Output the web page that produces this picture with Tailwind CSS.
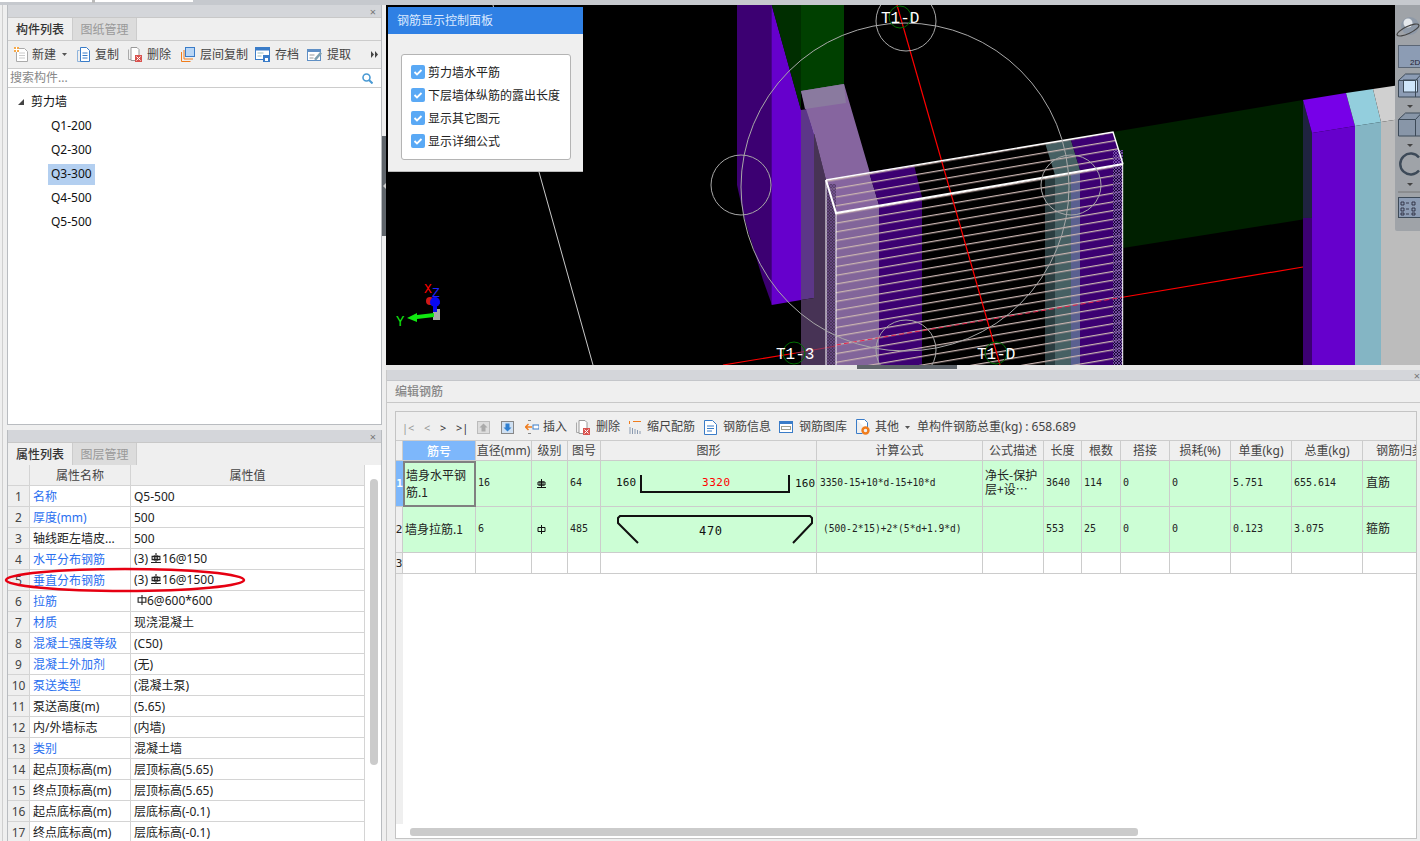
<!DOCTYPE html>
<html lang="zh-CN">

<head>
 <meta charset="UTF-8">
 <title>编辑钢筋</title>
 <script src="https://cdn.jsdelivr.net/npm/@tailwindcss/browser@4"></script>
</head>

<body class="bg-[#efefef]">
 <div class="relative w-[1420px] h-[841px] overflow-hidden flex flex-col text-[12px] leading-none text-[#222] font-['Noto_Sans','Noto_Sans_CJK_SC',sans-serif]">

  <!-- top edge -->
  <div class="h-[5px] shrink-0 flex bg-[#c6c9ce]">
   <div class="w-[92px] h-[2px] bg-white"></div>
   <div class="w-[3px] h-[3px] bg-[#bbb]"></div>
   <div class="w-[98px] h-[2px] bg-white"></div>
  </div>

  <div class="flex flex-1 min-h-0">

   <!-- left column -->
   <div class="w-[7px] shrink-0 bg-[#efefef] pl-[2px]"><div class="w-[1px] h-full bg-[#cfcfcf]"></div></div>

   <div class="w-[375px] shrink-0 flex flex-col">
    <!-- component list -->
    <div class="h-[420px] shrink-0 flex flex-col border-x border-b border-[#b9bcc0] bg-white">
     <div class="h-[12px] shrink-0 bg-[#d4d6da] flex items-center justify-end pr-[5px] text-[#777] text-[11px]">×</div>
     <div class="h-[23px] shrink-0 flex bg-[#efefef] border-t border-[#c8c8c8]">
      <div class="w-[64px] pt-[1px] flex items-center justify-center font-medium text-[#333]">构件列表</div>
      <div class="w-[65px] pt-[1px] flex items-center justify-center bg-[#dcdcdc] text-[#999] border-x border-[#ccc]">图纸管理</div>
     </div>
     <div class="h-[28px] shrink-0 flex items-center pl-[6px] gap-[9px] bg-[#efefef] border-t border-[#ccc] text-[#444]">
      <div class="flex items-center gap-[4px]">
       <svg class="w-[14px] h-[15px]" viewBox="0 0 14 15"><path d="M2.500 1.500h8l3 3v10h-11z" fill="#fff" stroke="#aaa"/><path d="M5 6h6M5 8.500h6M5 11h6" stroke="#ccc"/><rect x="0" y="0" width="5" height="5" fill="#f6a94a"/><path d="M2.500 0v5M0 2.500h5" stroke="#fff"/></svg>
       <span>新建</span>
       <svg class="w-[5px] h-[3px] ml-[2px]" viewBox="0 0 5 3"><path d="M0 0h5L2.500 3z" fill="#555"/></svg>
      </div>
      <div class="flex items-center gap-[5px] ml-[1px]">
       <svg class="w-[13px] h-[15px]" viewBox="0 0 13 15"><path d="M.5 3.500h2M.5 3.500v11h3" fill="none" stroke="#8fb4dd"/><path d="M3.500 .5h6l3 3v11h-9z" fill="#fff" stroke="#3a7cc8"/><path d="M5.500 6h5M5.500 8.500h5M5.500 11h5" stroke="#3a7cc8"/></svg>
       <span>复制</span>
      </div>
      <div class="flex items-center gap-[5px]">
       <svg class="w-[14px] h-[15px]" viewBox="0 0 14 15"><path d="M.5 2.500v10h3" fill="none" stroke="#aaa"/><path d="M3 .5h6l2 2v11H3z" fill="#fff" stroke="#999"/><rect x="7" y="8" width="7" height="7" fill="#d9534f"/><path d="M8.500 9.500l4 4M12.500 9.500l-4 4" stroke="#fff"/></svg>
       <span>删除</span>
      </div>
      <div class="flex items-center gap-[5px] ml-[1px]">
       <svg class="w-[14px] h-[15px]" viewBox="0 0 14 15"><path d="M.5 5v9.500h9M3 3v9h9" fill="none" stroke="#f07c1c"/><rect x="4.500" y=".5" width="9" height="9" fill="#b9d6f5" stroke="#3a7cc8"/></svg>
       <span>层间复制</span>
      </div>
      <div class="flex items-center gap-[5px] ml-[-2px]">
       <svg class="w-[15px] h-[15px]" viewBox="0 0 15 15"><rect x=".5" y=".5" width="14" height="12" fill="#fff" stroke="#3a7cc8"/><rect x="0" y="0" width="15" height="3.500" fill="#3a7cc8"/><path d="M2.500 6h6M2.500 9h4" stroke="#9bb"/><rect x="8" y="8" width="7" height="7" fill="#3a7cc8"/><rect x="10" y="11" width="3" height="3" fill="#fff"/></svg>
       <span>存档</span>
      </div>
      <div class="flex items-center gap-[5px] ml-[-1px]">
       <svg class="w-[15px] h-[15px]" viewBox="0 0 15 15"><rect x=".5" y="2.500" width="13" height="11" fill="#fff" stroke="#5f8fc5"/><rect x="0" y="2" width="14" height="3" fill="#5f8fc5"/><path d="M2.500 8h5M2.500 11h4" stroke="#999"/><path d="M7 12l6-7 2 1.500-6 7z" fill="#7fa0b0"/></svg>
       <span>提取</span>
      </div>
      <svg class="w-[7px] h-[7px] ml-[11px]" viewBox="0 0 7 7"><path d="M0 0l3 3.500L0 7zM4 0l3 3.500L4 7z" fill="#444"/></svg>
     </div>
     <div class="h-[20px] shrink-0 flex items-center justify-between pl-[2px] pr-[8px] border-y border-[#ccc] bg-white text-[#888]">
      <span>搜索构件...</span>
      <svg class="w-[11px] h-[11px]" viewBox="0 0 11 11"><circle cx="4.500" cy="4.500" r="3.500" fill="none" stroke="#4a9ad4" stroke-width="1.600"/><path d="M7 7l3.500 3.500" stroke="#4a9ad4" stroke-width="2"/></svg>
     </div>
     <div class="flex-1 pt-[2px] text-[#111]">
      <div class="h-[24px] flex items-center pl-[10px] gap-[7px]">
       <svg class="w-[6px] h-[6px]" viewBox="0 0 6 6"><path d="M6 0v6H0z" fill="#444"/></svg>
       <span>剪力墙</span>
      </div>
      <div class="h-[24px] flex items-center pl-[40px]"><span class="px-[3px] h-[21px] flex items-center">Q1-200</span></div>
      <div class="h-[24px] flex items-center pl-[40px]"><span class="px-[3px] h-[21px] flex items-center">Q2-300</span></div>
      <div class="h-[24px] flex items-center pl-[40px]"><span class="px-[3px] h-[21px] flex items-center bg-[#b3cff0]">Q3-300</span></div>
      <div class="h-[24px] flex items-center pl-[40px]"><span class="px-[3px] h-[21px] flex items-center">Q4-500</span></div>
      <div class="h-[24px] flex items-center pl-[40px]"><span class="px-[3px] h-[21px] flex items-center">Q5-500</span></div>
     </div>
    </div>

    <div class="h-[5px] shrink-0"></div>

    <!-- property list -->
    <div class="flex-1 min-h-0 flex flex-col border-x border-[#b9bcc0] bg-white overflow-hidden">
     <div class="h-[12px] shrink-0 bg-[#d4d6da] flex items-center justify-end pr-[5px] text-[#777] text-[11px]">×</div>
     <div class="h-[23px] shrink-0 flex bg-[#efefef] border-t border-[#c8c8c8]">
      <div class="w-[64px] pt-[1px] flex items-center justify-center font-medium text-[#333]">属性列表</div>
      <div class="w-[65px] pt-[1px] flex items-center justify-center bg-[#dcdcdc] text-[#999] border-x border-[#ccc]">图层管理</div>
     </div>
     <div class="flex flex-1 min-h-0">
      <div class="w-[357px] shrink-0">
       <div class="grid grid-cols-[22px_101px_234px] h-[21px] bg-[#efefef] text-[#444]">
        <div class="border-r border-b border-[#d4d4d4]"></div>
        <div class="border-r border-b border-[#d4d4d4] pt-[2px] flex items-center justify-center">属性名称</div>
        <div class="border-r border-b border-[#d4d4d4] pt-[2px] flex items-center justify-center">属性值</div>
       </div>
       <div id="propRows"></div>
      </div>
      <div class="flex-1 pl-[5px] pt-[14px]">
       <div class="w-[8px] h-[286px] rounded-[4px] bg-[#cbcbcb]"></div>
      </div>
     </div>
    </div>
   </div>

   <!-- splitter -->
   <div class="w-[4px] shrink-0 bg-[#efefef]">
    <div class="mt-[131px] h-[100px] bg-[#5f656b] flex items-center justify-center">
     <svg class="w-[3px] h-[6px]" viewBox="0 0 3 6"><path d="M3 0v6L0 3z" fill="#ccc"/></svg>
    </div>
   </div>

   <!-- right column -->
   <div class="flex-1 min-w-0 flex flex-col">
    <div class="relative h-[360px] shrink-0 bg-black overflow-hidden">
     <svg class="w-[1034px] h-[360px] block" viewBox="386 5 1034 360">
      <defs>
       <pattern id="rebar" patternUnits="userSpaceOnUse" width="60" height="8.700" patternTransform="skewY(-9.700)">
        <rect width="60" height="1.300" fill="#c9b4b0"/>
       </pattern>
       <pattern id="hatch" patternUnits="userSpaceOnUse" width="3" height="3">
        <path d="M0 0l3 3M3 0L0 3" stroke="#a070d8" stroke-width=".6"/>
       </pattern>
      </defs>

      <!-- left column and wall behind -->
      <path d="M737 5h35v300l-9-25-19-63-7-32z" fill="#3c0072"/>
      <path d="M771.700 5L801 110v190l-29.300 5z" fill="#6600cc"/>
      <path d="M771.700 5H801v105z" fill="#002e00"/>
      <path d="M801 5h43v80l-43 6z" fill="#004000"/>
      <path d="M801 110l13-2v190l-13 2z" fill="#5c3688"/>
      <path d="M807 109l8-1 8 27-9-1z" fill="#9c6cd8"/>
      <path d="M801 300l13-2V133l12 47v185h-25z" fill="#473355"/>
      <path d="M801 91l43-7 26 89-44 7-12-47-8-24z" fill="#86659f"/>
      <path d="M801 91l43-7 2 19-41 6z" fill="#8a7a9f"/>

      <!-- right wall -->
      <path d="M1113 132l190-32 9 118-189 30v-84z" fill="#002000"/>
      <path d="M1303 100l9 33v85h-9z" fill="#1f2340"/>
      <path d="M1303 218h9v147h-9z" fill="#3c0072"/>
      <path d="M1312 133l43-7v239h-43z" fill="#6600cc"/>
      <path d="M1303 100l43-7 9 33-43 7z" fill="#7700e8"/>
      <path d="M1355 126l26-4v243h-26z" fill="#84b5c4"/>
      <path d="M1346 93l27-4 8 33-26 4z" fill="#93cedd"/>
      <path d="M1373 89l47-7v34l-39 6z" fill="#d0d0d0"/>
      <path d="M1381 122l39-6v249h-39z" fill="#bcbcbc"/>

      <!-- wall body inside the wire box -->
      <path d="M826 180l43-8 10 33-43 8z" fill="#86659f"/>
      <path d="M869 172l45-7 8 32-43 8z" fill="#3c0072"/>
      <path d="M1045 143l26-3 9 30-25 5z" fill="#466063"/>
      <path d="M1071 140l42-8 10 32-43 6z" fill="#3c0072"/>
      <path d="M836 213l43-8v160h-43z" fill="#82659a"/>
      <path d="M879 205l43-8v168h-43z" fill="#3c0072"/>
      <path d="M1045 177l10-2v190h-10z" fill="#2a3d40"/>
      <path d="M1055 175l16-3v193h-16z" fill="#466063"/>
      <path d="M1071 172l9-2v195h-9z" fill="#5a6090"/>
      <path d="M1080 170l33-5v200h-33z" fill="#3c0072"/>
      <path d="M826 180v185h10V213z" fill="#473355"/>
      <path d="M826 180l287-48 10 32v201H836V213z" fill="url(#rebar)"/>
      <rect x="826" y="184" width="10" height="181" fill="#473355" fill-opacity=".7"/>
      <rect x="826" y="184" width="10" height="181" fill="url(#hatch)" fill-opacity=".5"/>
      <rect x="1113" y="150" width="10" height="215" fill="#2c0a58" fill-opacity=".6"/>
      <rect x="1113" y="150" width="10" height="215" fill="url(#hatch)"/>

      <!-- axis lines -->
      <path d="M897 5l103 360" stroke="#f00" stroke-width="1.200" fill="none"/>
      <path d="M1124 297l179-30" stroke="#f00" stroke-width="1.200" fill="none"/>
      <path d="M836 345l288-48" stroke="#e8204a" stroke-dasharray="5 3" fill="none"/>
      <path d="M723 365l73-12" stroke="#f00" stroke-width="1.200" fill="none"/>
      <path d="M796 353l40-7" stroke="#a03050" fill="none"/>
      <path d="M539 172l54 193M493 5l.5 2" stroke="#c8c8c8" fill="none"/>

      <!-- wire box -->
      <path d="M836 213V365M826 180V365M1122.700 164V365" stroke="#fff" fill="none"/>
      <path d="M826 180l287-48 10 32" stroke="#fff" stroke-width="1.400" fill="none"/>
      <path d="M826 180l10 33 287-49" stroke="#fff" stroke-width="2" fill="none"/>

      <!-- grid circles -->
      <g fill="none" stroke="#a8a8a8">
       <circle cx="905" cy="187" r="164"/>
       <circle cx="741" cy="185" r="30"/>
       <circle cx="906" cy="21" r="30"/>
       <circle cx="1071" cy="185" r="30"/>
       <circle cx="906" cy="350" r="30"/>
      </g>
      <g fill="none" stroke="#007000">
       <circle cx="900" cy="17" r="11"/>
       <circle cx="794" cy="353" r="11"/>
       <circle cx="996" cy="353" r="11"/>
      </g>
      <g fill="#fff" font-size="16" font-family="Liberation Mono, monospace">
       <text x="881" y="23">T1-D</text>
       <text x="776" y="359">T1-3</text>
       <text x="977" y="359">T1-D</text>
      </g>

      <!-- axis gizmo -->
      <circle cx="430" cy="301" r="4" fill="#d01818"/>
      <rect x="433" y="309" width="7" height="11" fill="#aaa"/>
      <path d="M407 318l10-5v2l17-2v4l-17 2v3z" fill="#10e810"/>
      <path d="M433 312h4v-8h3l-5-7-5 7h3z" fill="#0808f0"/>
      <circle cx="435" cy="302" r="5" fill="#0808f0"/>
      <text x="424" y="293" font-size="13" fill="#f00" font-family="Liberation Mono, monospace">X</text>
      <text x="432" y="297" font-size="13" fill="#2020ff" font-family="Liberation Mono, monospace">Z</text>
      <text x="396" y="326" font-size="14" fill="#10e810" font-family="Liberation Mono, monospace">Y</text>
     </svg>

     <!-- rebar display panel -->
     <div class="absolute left-[2px] top-[2px] w-[195px] h-[165px] bg-[#efefef] border-b border-[#bbb]">
      <div class="h-[27px] bg-[#2f80e4] text-[#dbe9ff] flex items-center pl-[9px]">钢筋显示控制面板</div>
      <div class="mt-[20px] ml-[13px] w-[170px] h-[106px] bg-white border border-[#b4b4b4] rounded-[3px] pt-[10px] pl-[9px] flex flex-col gap-[9px]">
       <label class="flex items-center gap-[3px] h-[14px]">
        <svg class="w-[14px] h-[14px]" viewBox="0 0 14 14"><rect width="14" height="14" rx="2" fill="#5aa9f5"/><path d="M3.500 7l2.500 2.500 4.500-4.500" fill="none" stroke="#fff" stroke-width="1.800"/></svg>
        <span class="pt-[2px]">剪力墙水平筋</span>
       </label>
       <label class="flex items-center gap-[3px] h-[14px]">
        <svg class="w-[14px] h-[14px]" viewBox="0 0 14 14"><rect width="14" height="14" rx="2" fill="#5aa9f5"/><path d="M3.500 7l2.500 2.500 4.500-4.500" fill="none" stroke="#fff" stroke-width="1.800"/></svg>
        <span class="pt-[2px]">下层墙体纵筋的露出长度</span>
       </label>
       <label class="flex items-center gap-[3px] h-[14px]">
        <svg class="w-[14px] h-[14px]" viewBox="0 0 14 14"><rect width="14" height="14" rx="2" fill="#5aa9f5"/><path d="M3.500 7l2.500 2.500 4.500-4.500" fill="none" stroke="#fff" stroke-width="1.800"/></svg>
        <span class="pt-[2px]">显示其它图元</span>
       </label>
       <label class="flex items-center gap-[3px] h-[14px]">
        <svg class="w-[14px] h-[14px]" viewBox="0 0 14 14"><rect width="14" height="14" rx="2" fill="#5aa9f5"/><path d="M3.500 7l2.500 2.500 4.500-4.500" fill="none" stroke="#fff" stroke-width="1.800"/></svg>
        <span class="pt-[2px]">显示详细公式</span>
       </label>
      </div>
     </div>

     <!-- view tool rail -->
     <div class="absolute right-0 top-0 w-[25px] h-[226px] bg-[#9fa3a8] rounded-bl-[2px] overflow-hidden">
      <svg class="w-[25px] h-[226px] block" viewBox="0 0 25 226">
       <circle cx="15" cy="21" r="9" fill="#8f9aa8"/>
       <circle cx="13" cy="18" r="4.500" fill="#e4e8ec"/>
       <ellipse cx="13" cy="25" rx="12" ry="3.500" fill="none" stroke="#444" stroke-width="1.200" transform="rotate(-25 13 25)"/>
       <rect x="3.500" y="40.500" width="26" height="22" fill="#8c9cb4" stroke="#5b6675"/>
       <text x="15" y="60" font-size="8" fill="#223" font-family="Liberation Sans, sans-serif">2D</text>
       <path d="M3.500 75.500l7-6.500H30v23H3.500z" fill="#8c9cb4" stroke="#3d4a58"/>
       <rect x="8.500" y="75" width="14" height="12" fill="#cfe6fb" stroke="#3d4a58"/>
       <path d="M3.500 75.500h17v16.500M20.500 75.500l6-6.500" fill="none" stroke="#3d4a58"/>
       <path d="M12 100h6l-3 3z" fill="#444"/>
       <path d="M3.500 114.500l7-6.500H30v23H3.500z" fill="#8896a8" stroke="#3d4a58"/>
       <path d="M3.500 114.500h17v16.500M20.500 114.500l6-6.500" fill="none" stroke="#3d4a58"/>
       <path d="M12 139h6l-3 3z" fill="#444"/>
       <path d="M24 152.500a10.500 10.500 0 1 0 0 13" fill="none" stroke="#3d4a58" stroke-width="2.400"/>
       <path d="M12 178h6l-3 3z" fill="#444"/>
       <path d="M3 187h22" stroke="#777"/>
       <rect x="3.500" y="192.500" width="26" height="20" fill="#8c9cb4" stroke="#3d4a58"/>
       <path d="M6 197h3v3H6zM6 203h3v3H6zM6 208h3v2H6zM11 198h3M11 204h3M11 209h3M17 197h3v3h-3zM17 203h3v3h-3zM17 208h3v2h-3z" fill="none" stroke="#223" stroke-width=".8"/>
      </svg>
     </div>
    </div>

    <!-- viewport splitter -->
    <div class="h-[5px] shrink-0 bg-[#e6e6e6] pl-[471px]">
     <div class="w-[100px] h-[4px] bg-[#5f656b]"></div>
    </div>

    <!-- rebar editor -->
    <div class="flex-1 min-h-0 flex flex-col border-l border-[#c8c8c8] bg-[#efefef]">
     <div class="h-[11px] shrink-0 bg-[#d4d6da] border-b border-[#c4c6ca] flex items-center justify-end text-[#777] text-[11px]">×</div>
     <div class="h-[22px] shrink-0 flex items-center pl-[8px] text-[#888] font-medium border-b border-[#c8c8c8]">编辑钢筋</div>

     <div class="flex-1 min-h-0 flex flex-col ml-[8px] mr-[3px] mt-[8px] mb-[2px] border border-[#c4c4c4] bg-white overflow-hidden">
      <!-- toolbar -->
      <div class="h-[28px] shrink-0 flex items-center pl-[6px] pt-[2px] bg-[#efefef] text-[#444]">
       <span class="w-[22px] text-[#999] text-[11px]">|&lt;</span>
       <span class="w-[16px] text-[#999] text-[11px]">&lt;</span>
       <span class="w-[16px] text-[#333] text-[11px]">&gt;</span>
       <span class="w-[21px] text-[#333] text-[11px]">&gt;|</span>
       <svg class="w-[13px] h-[13px] mr-[11px]" viewBox="0 0 13 13"><rect x=".5" y=".5" width="12" height="12" fill="#ddd" stroke="#bbb"/><path d="M6.500 2.500l4 4H8.500v4h-4v-4H2.500z" fill="#aaa"/></svg>
       <svg class="w-[13px] h-[13px] mr-[11px]" viewBox="0 0 13 13"><rect x=".5" y=".5" width="12" height="12" fill="#cfe0f2" stroke="#888"/><path d="M6.500 10.500l4-4H8.500v-4h-4v4H2.500z" fill="#2f7fd0"/></svg>
       <svg class="w-[14px] h-[14px] mr-[4px]" viewBox="0 0 14 14"><path d="M3 .5h3M3 13.500h3" stroke="#888"/><path d="M7 7H1M3.500 4L.5 7l3 3" fill="none" stroke="#f07c1c" stroke-width="1.400"/><rect x="8" y="5" width="6" height="4" fill="#fff" stroke="#3a7cc8"/></svg>
       <span class="mr-[9px]">插入</span>
       <svg class="w-[14px] h-[15px] mr-[6px]" viewBox="0 0 14 15"><path d="M.5 2.500v10h3" fill="none" stroke="#aaa"/><path d="M3 .5h6l2 2v11H3z" fill="#fff" stroke="#999"/><rect x="7" y="8" width="7" height="7" fill="#d9534f"/><path d="M8.500 9.500l4 4M12.500 9.500l-4 4" stroke="#fff"/></svg>
       <span class="mr-[9px]">删除</span>
       <svg class="w-[13px] h-[14px] mr-[5px]" viewBox="0 0 13 14"><path d="M.5 1v3M4 1.500h8" stroke="#f07c1c"/><path d="M1 14V7M3.500 14V8M6 14V9M8.500 14v-4M11 14v-3" stroke="#8a9ab0"/></svg>
       <span class="mr-[9px]">缩尺配筋</span>
       <svg class="w-[13px] h-[15px] mr-[6px]" viewBox="0 0 13 15"><path d="M.5 .5h8l4 4v10H.5z" fill="#fff" stroke="#3a7cc8"/><path d="M3 6h7M3 8.500h7M3 11h5" stroke="#3a7cc8"/></svg>
       <span class="mr-[8px]">钢筋信息</span>
       <svg class="w-[14px] h-[12px] mr-[6px]" viewBox="0 0 14 12"><rect x=".5" y=".5" width="13" height="11" fill="#fff" stroke="#3a7cc8"/><rect width="14" height="3" fill="#3a7cc8"/><rect x="2.500" y="5.500" width="9" height="3" fill="none" stroke="#a0a090"/></svg>
       <span class="mr-[9px]">钢筋图库</span>
       <svg class="w-[14px] h-[16px] mr-[5px]" viewBox="0 0 14 16"><path d="M.5 .5h8l3 3v8" fill="#fff" stroke="#3a7cc8"/><path d="M.5 .5v14h6" fill="none" stroke="#3a7cc8"/><circle cx="9.500" cy="11.500" r="3" fill="none" stroke="#f07c1c" stroke-width="2.400"/></svg>
       <span class="mr-[6px]">其他</span>
       <svg class="w-[5px] h-[3px] mr-[7px]" viewBox="0 0 5 3"><path d="M0 0h5L2.500 3z" fill="#555"/></svg>
       <span>单构件钢筋总重(kg) : 658.689</span>
      </div>

      <!-- rebar table -->
      <div class="shrink-0 grid grid-cols-[7px_73px_56px_36px_33px_216px_166px_61px_38px_39px_49px_61px_61px_71px_60px] grid-rows-[20px_46px_46px_21px] font-['DejaVu_Sans_Mono','Noto_Sans_CJK_SC',monospace] text-[10px] border-t border-[#ccc]">
       <!-- header row -->
       <div class="bg-[#efefef] border-r border-b border-[#ccc]"></div>
       <div class="bg-[#7db7fb] text-white border-r border-b border-[#ccc] flex items-center justify-center font-['Noto_Sans_CJK_SC',sans-serif] text-[12px] font-medium">筋号</div>
       <div class="bg-[#efefef] text-[#444] border-r border-b border-[#ccc] flex items-center justify-center font-['Noto_Sans','Noto_Sans_CJK_SC',sans-serif] text-[12px] whitespace-nowrap overflow-hidden">直径(mm)</div>
       <div class="bg-[#efefef] text-[#444] border-r border-b border-[#ccc] flex items-center justify-center font-['Noto_Sans','Noto_Sans_CJK_SC',sans-serif] text-[12px]">级别</div>
       <div class="bg-[#efefef] text-[#444] border-r border-b border-[#ccc] flex items-center justify-center font-['Noto_Sans','Noto_Sans_CJK_SC',sans-serif] text-[12px]">图号</div>
       <div class="bg-[#efefef] text-[#444] border-r border-b border-[#ccc] flex items-center justify-center font-['Noto_Sans','Noto_Sans_CJK_SC',sans-serif] text-[12px]">图形</div>
       <div class="bg-[#efefef] text-[#444] border-r border-b border-[#ccc] flex items-center justify-center font-['Noto_Sans','Noto_Sans_CJK_SC',sans-serif] text-[12px]">计算公式</div>
       <div class="bg-[#efefef] text-[#444] border-r border-b border-[#ccc] flex items-center justify-center font-['Noto_Sans','Noto_Sans_CJK_SC',sans-serif] text-[12px]">公式描述</div>
       <div class="bg-[#efefef] text-[#444] border-r border-b border-[#ccc] flex items-center justify-center font-['Noto_Sans','Noto_Sans_CJK_SC',sans-serif] text-[12px]">长度</div>
       <div class="bg-[#efefef] text-[#444] border-r border-b border-[#ccc] flex items-center justify-center font-['Noto_Sans','Noto_Sans_CJK_SC',sans-serif] text-[12px]">根数</div>
       <div class="bg-[#efefef] text-[#444] border-r border-b border-[#ccc] flex items-center justify-center font-['Noto_Sans','Noto_Sans_CJK_SC',sans-serif] text-[12px]">搭接</div>
       <div class="bg-[#efefef] text-[#444] border-r border-b border-[#ccc] flex items-center justify-center font-['Noto_Sans','Noto_Sans_CJK_SC',sans-serif] text-[12px]">损耗(%)</div>
       <div class="bg-[#efefef] text-[#444] border-r border-b border-[#ccc] flex items-center justify-center font-['Noto_Sans','Noto_Sans_CJK_SC',sans-serif] text-[12px]">单重(kg)</div>
       <div class="bg-[#efefef] text-[#444] border-r border-b border-[#ccc] flex items-center justify-center font-['Noto_Sans','Noto_Sans_CJK_SC',sans-serif] text-[12px]">总重(kg)</div>
       <div class="bg-[#efefef] text-[#444] border-b border-[#ccc] flex items-center pl-[13px] font-['Noto_Sans','Noto_Sans_CJK_SC',sans-serif] text-[12px] whitespace-nowrap overflow-hidden">钢筋归类</div>

       <!-- row 1 -->
       <div class="bg-[#7db7fb] text-white border-b border-[#ccc] flex items-center justify-center font-bold text-[11px]">1</div>
       <div class="bg-[#ccfed5] border-2 border-[#808080] flex items-center pl-[1px] pb-[2px] font-['Noto_Sans_CJK_SC',sans-serif] text-[12px] leading-[17px]">墙身水平钢筋.1</div>
       <div class="bg-[#ccfed5] border-r border-b border-[#ccc] flex items-center pl-[2px] pb-[2px]">16</div>
       <div class="bg-[#ccfed5] border-r border-b border-[#ccc] flex items-center pl-[5px] pb-[1px]">
        <svg class="w-[9px] h-[9px]" viewBox="0 0 9 9"><path d="M4.500 0v8M3 2v5M6 2v5M1 3h7v3H1zM0 8.500h9" fill="none" stroke="#111"/></svg>
       </div>
       <div class="bg-[#ccfed5] border-r border-b border-[#ccc] flex items-center pl-[2px] pb-[2px]">64</div>
       <div class="bg-[#ccfed5] border-r border-b border-[#ccc]">
        <svg class="w-[215px] h-[45px] block" viewBox="0 0 215 45">
         <text x="15" y="25" font-size="11" fill="#111" font-family="DejaVu Sans Mono, monospace" textLength="20">160</text>
         <path d="M40 14v17h148V14" fill="none" stroke="#111" stroke-width="2"/>
         <text x="101" y="25" font-size="11" fill="#f00" font-family="DejaVu Sans Mono, monospace" textLength="28">3320</text>
         <text x="194" y="26" font-size="11" fill="#111" font-family="DejaVu Sans Mono, monospace" textLength="20">160</text>
        </svg>
       </div>
       <div class="bg-[#ccfed5] border-r border-b border-[#ccc] flex items-center pl-[3px] pb-[2px] whitespace-nowrap text-[9.600px]">3350-15+10*d-15+10*d</div>
       <div class="bg-[#ccfed5] border-r border-b border-[#ccc] flex items-center pl-[2px] pb-[4px] font-['Noto_Sans_CJK_SC',sans-serif] text-[12px] leading-[14px]">净长-保护层+设…</div>
       <div class="bg-[#ccfed5] border-r border-b border-[#ccc] flex items-center pl-[2px] pb-[2px]">3640</div>
       <div class="bg-[#ccfed5] border-r border-b border-[#ccc] flex items-center pl-[2px] pb-[2px]">114</div>
       <div class="bg-[#ccfed5] border-r border-b border-[#ccc] flex items-center pl-[2px] pb-[2px]">0</div>
       <div class="bg-[#ccfed5] border-r border-b border-[#ccc] flex items-center pl-[2px] pb-[2px]">0</div>
       <div class="bg-[#ccfed5] border-r border-b border-[#ccc] flex items-center pl-[2px] pb-[2px]">5.751</div>
       <div class="bg-[#ccfed5] border-r border-b border-[#ccc] flex items-center pl-[2px] pb-[2px]">655.614</div>
       <div class="bg-[#ccfed5] border-b border-[#ccc] flex items-center pl-[3px] pb-[4px] font-['Noto_Sans_CJK_SC',sans-serif] text-[12px]">直筋</div>

       <!-- row 2 -->
       <div class="bg-[#efefef] border-r border-b border-[#ccc] flex items-center justify-center text-[11px] overflow-hidden">2</div>
       <div class="bg-[#ccfed5] border-r border-b border-[#ccc] flex items-center pl-[2px] pb-[2px] font-['Noto_Sans_CJK_SC',sans-serif] text-[12px] whitespace-nowrap">墙身拉筋.1</div>
       <div class="bg-[#ccfed5] border-r border-b border-[#ccc] flex items-center pl-[2px] pb-[2px]">6</div>
       <div class="bg-[#ccfed5] border-r border-b border-[#ccc] flex items-center pl-[5px] pb-[1px]">
        <svg class="w-[9px] h-[9px]" viewBox="0 0 9 9"><path d="M4.500 0v9M1 2.500h7v4H1z" fill="none" stroke="#111"/></svg>
       </div>
       <div class="bg-[#ccfed5] border-r border-b border-[#ccc] flex items-center pl-[2px] pb-[2px]">485</div>
       <div class="bg-[#ccfed5] border-r border-b border-[#ccc]">
        <svg class="w-[215px] h-[45px] block" viewBox="0 0 215 45">
         <path d="M37 36L17 16v-5l2-2h190l2 2v5L192 36" fill="none" stroke="#111" stroke-width="2"/>
         <text x="98" y="28" font-size="12" fill="#111" font-family="DejaVu Sans Mono, monospace" textLength="23">470</text>
        </svg>
       </div>
       <div class="bg-[#ccfed5] border-r border-b border-[#ccc] flex items-center pl-[6px] pb-[2px] whitespace-nowrap text-[9.600px]">(500-2*15)+2*(5*d+1.9*d)</div>
       <div class="bg-[#ccfed5] border-r border-b border-[#ccc]"></div>
       <div class="bg-[#ccfed5] border-r border-b border-[#ccc] flex items-center pl-[2px] pb-[2px]">553</div>
       <div class="bg-[#ccfed5] border-r border-b border-[#ccc] flex items-center pl-[2px] pb-[2px]">25</div>
       <div class="bg-[#ccfed5] border-r border-b border-[#ccc] flex items-center pl-[2px] pb-[2px]">0</div>
       <div class="bg-[#ccfed5] border-r border-b border-[#ccc] flex items-center pl-[2px] pb-[2px]">0</div>
       <div class="bg-[#ccfed5] border-r border-b border-[#ccc] flex items-center pl-[2px] pb-[2px]">0.123</div>
       <div class="bg-[#ccfed5] border-r border-b border-[#ccc] flex items-center pl-[2px] pb-[2px]">3.075</div>
       <div class="bg-[#ccfed5] border-b border-[#ccc] flex items-center pl-[3px] pb-[4px] font-['Noto_Sans_CJK_SC',sans-serif] text-[12px]">箍筋</div>

       <!-- row 3 -->
       <div class="bg-[#efefef] border-r border-b border-[#ccc] flex items-center justify-center text-[11px] overflow-hidden">3</div>
       <div class="border-r border-b border-[#ccc]"></div>
       <div class="border-r border-b border-[#ccc]"></div>
       <div class="border-r border-b border-[#ccc]"></div>
       <div class="border-r border-b border-[#ccc]"></div>
       <div class="border-r border-b border-[#ccc]"></div>
       <div class="border-r border-b border-[#ccc]"></div>
       <div class="border-r border-b border-[#ccc]"></div>
       <div class="border-r border-b border-[#ccc]"></div>
       <div class="border-r border-b border-[#ccc]"></div>
       <div class="border-r border-b border-[#ccc]"></div>
       <div class="border-r border-b border-[#ccc]"></div>
       <div class="border-r border-b border-[#ccc]"></div>
       <div class="border-r border-b border-[#ccc]"></div>
       <div class="border-b border-[#ccc]"></div>
      </div>

      <!-- empty table area and scrollbar -->
      <div class="flex-1 min-h-0 flex flex-col">
       <div class="flex-1"><div class="w-[7px] h-full bg-[#efefef]"></div></div>
       <div class="h-[14px] shrink-0 pl-[14px] pt-[4px]">
        <div class="w-[728px] h-[8px] rounded-[3px] bg-[#cbcbcb]"></div>
       </div>
      </div>
     </div>
    </div>
   </div>
  </div>

  <!-- red hand-drawn mark on row 5 -->
  <svg class="absolute left-[4px] top-[566px] w-[244px] h-[28px]" viewBox="0 0 244 28">
   <ellipse cx="121" cy="14" rx="119" ry="11" fill="none" stroke="#e60012" stroke-width="2.500"/>
  </svg>
 </div>

 <script>
  const grade3 = '<svg class="inline-block w-[10px] h-[10px] ml-[3px] mr-[1px] mb-[4px]" viewBox="0 0 9 9"><path d="M4.500 0v8M3 2v5M6 2v5M1 3h7v3H1zM0 8.500h9" fill="none" stroke="#222"/></svg>';
  const grade1 = '<svg class="inline-block w-[10px] h-[10px] ml-[3px] mb-[4px]" viewBox="0 0 9 9"><path d="M4.500 0v9M1 2.500h7v4H1z" fill="none" stroke="#222"/></svg>';

  const props = [
   ['名称', 'Q5-500', true],
   ['厚度(mm)', '500', true],
   ['轴线距左墙皮...', '500', false],
   ['水平分布钢筋', `(3)${grade3}16@150`, true],
   ['垂直分布钢筋', `(3)${grade3}16@1500`, true],
   ['拉筋', `${grade1}6@600*600`, true],
   ['材质', '现浇混凝土', true],
   ['混凝土强度等级', '(C50)', true],
   ['混凝土外加剂', '(无)', true],
   ['泵送类型', '(混凝土泵)', true],
   ['泵送高度(m)', '(5.65)', false],
   ['内/外墙标志', '(内墙)', false],
   ['类别', '混凝土墙', true],
   ['起点顶标高(m)', '层顶标高(5.65)', false],
   ['终点顶标高(m)', '层顶标高(5.65)', false],
   ['起点底标高(m)', '层底标高(-0.1)', false],
   ['终点底标高(m)', '层底标高(-0.1)', false],
  ];

  document.getElementById('propRows').innerHTML = props.map((row, index) => `
   <div class="grid grid-cols-[22px_101px_234px] h-[21px]">
    <div class="bg-[#efefef] border-r border-b border-[#d4d4d4] pt-[1px] flex items-center justify-center text-[#444]">${index + 1}</div>
    <div class="border-r border-b border-[#d4d4d4] pt-[1px] flex items-center pl-[3px] whitespace-nowrap ${row[2] ? 'text-[#2a6ff0]' : 'text-[#222]'}">${row[0]}</div>
    <div class="border-r border-b border-[#d4d4d4] pt-[1px] flex items-center pl-[3px] whitespace-nowrap text-[#222]"><span>${row[1]}</span></div>
   </div>
  `).join('');
 </script>
</body>

</html>
